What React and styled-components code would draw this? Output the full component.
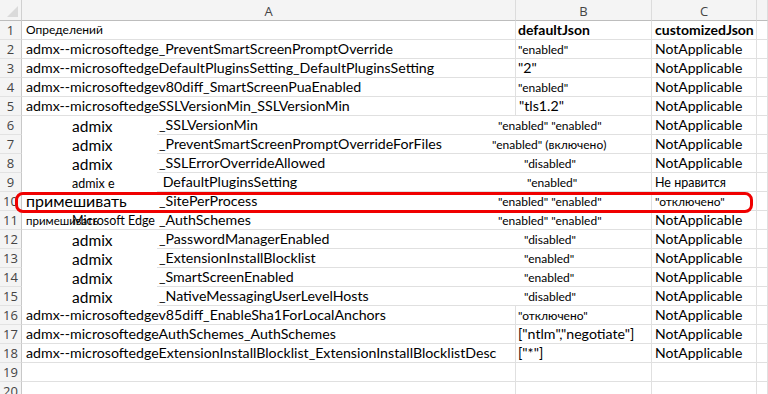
import React from "react";
import styled, { createGlobalStyle } from "styled-components";

const Global = createGlobalStyle`
  html, body { margin: 0; padding: 0; background: #fff; }
  body { font-family: Lato, "Liberation Sans", sans-serif; color: #000; overflow: hidden; }
`;

const Sheet = styled.div`
  position: relative;
  width: 768px;
  height: 394px;
  overflow: hidden;
  background: #fff;
`;

const Row = styled.div`
  display: flex;
  height: ${(p) => p.h || 19}px;
`;

const Corner = styled.div`
  position: relative;
  width: 22px;
  flex: none;
  background: #f4f4f4;
  border-right: 1px solid #d0d0d0;
  border-bottom: 1px solid #bdbdbd;
  box-sizing: border-box;
  &::after {
    content: "";
    position: absolute;
    right: 3px;
    bottom: 3px;
    width: 0;
    height: 0;
    border-left: 11px solid transparent;
    border-bottom: 11px solid #dadada;
  }
`;

const ColHead = styled.div`
  width: ${(p) => p.w}px;
  flex: ${(p) => (p.w ? "none" : "1")};
  background: #f4f4f4;
  border-right: 1px solid #dcdcdc;
  border-bottom: 1px solid #bdbdbd;
  box-sizing: border-box;
  display: flex;
  align-items: center;
  justify-content: center;
  font-family: "Open Sans", sans-serif;
  font-size: 13px;
  color: #444;
  padding-top: 1px;
`;

const RowHead = styled.div`
  width: 22px;
  flex: none;
  background: #f4f4f4;
  border-right: 1px solid #c8c8c8;
  border-bottom: 1px solid #e2e2e2;
  box-sizing: border-box;
  display: flex;
  align-items: center;
  justify-content: center;
  font-family: "Open Sans", sans-serif;
  font-size: 13px;
  color: #444;
`;

const Cell = styled.div`
  width: ${(p) => p.w}px;
  flex: ${(p) => (p.w ? "none" : "1")};
  box-sizing: border-box;
  border-right: 1px solid #e0e0e0;
  border-bottom: 1px solid #e0e0e0;
  display: flex;
  align-items: flex-end;
  padding-left: ${(p) => p.pl ?? 4}px;
  padding-bottom: 1px;
  white-space: nowrap;
  overflow: visible;
  min-width: 0;
`;

const Txt = styled.span`
  font-size: ${(p) => p.fs || 14.2}px;
  font-weight: ${(p) => (p.bold ? 700 : 400)};
  line-height: ${(p) => p.lh || 17}px;
  position: relative;
  top: ${(p) => p.dy || 0}px;
  white-space: pre;
`;

const SpanCell = styled.div`
  width: ${(p) => p.w}px;
  flex: none;
  box-sizing: border-box;
  border-right: 1px solid #e0e0e0;
  border-bottom: 1px solid #e0e0e0;
  display: grid;
  grid-template-columns: 359px 1fr;
  align-items: end;
  padding-bottom: 1px;
  white-space: nowrap;
`;

const Mid = styled.div`
  height: 100%;
  box-sizing: border-box;
  display: flex;
  align-items: flex-end;
  padding-left: 2px;
`;

const Val = styled.div`
  display: flex;
  align-items: flex-end;
  height: 100%;
  margin-left: ${(p) => p.ml}px;
`;

const Highlight = styled.div`
  position: absolute;
  left: 15px;
  top: 192px;
  width: 738px;
  height: 21px;
  border: 3px solid #f00000;
  border-radius: 8px;
  box-sizing: border-box;
  pointer-events: none;
`;

const Label = styled.div`
  width: 135px;
  flex: none;
  box-sizing: border-box;
  border-bottom: ${(p) => (p.lb ? "1px solid #e0e0e0" : "none")};
  position: relative;
  display: flex;
  align-items: flex-end;
  padding-left: ${(p) => p.pl}px;
  white-space: nowrap;
`;

const Over = styled.span`
  position: absolute;
  left: 50px;
  bottom: 0px;
  font-size: 12.5px;
  line-height: 16px;
`;

const W = { A: 494, B: 136, C: 105 };

const top = [
  ["Определений", "defaultJson", "customizedJson", { aFs: 12, head: true }],
  ["admx--microsoftedge_PreventSmartScreenPromptOverride", '"enabled"', "NotApplicable", { bFs: 12 }],
  ["admx--microsoftedgeDefaultPluginsSetting_DefaultPluginsSetting", '"2"', "NotApplicable", {}],
  ["admx--microsoftedgev80diff_SmartScreenPuaEnabled", '"enabled"', "NotApplicable", { bFs: 12 }],
  ["admx--microsoftedgeSSLVersionMin_SSLVersionMin", '"tls1.2"', "NotApplicable", { bPl: 3 }],
];

const mid = [
  { label: "admix", name: "_SSLVersionMin", val: '"enabled" "enabled"', vx: 499 },
  { label: "admix", name: "_PreventSmartScreenPromptOverrideForFiles", val: '"enabled" (включено)', vx: 493 },
  { label: "admix", name: "_SSLErrorOverrideAllowed", val: '"disabled"', vx: 525 },
  { label: "admix e", labelFs: 12.5, name: " DefaultPluginsSetting", val: '"enabled"', vx: 528, c: "Не нравится", cFs: 12.5 },
  { label: "примешивать", lx: 27, labelFs: 16, labelLh: 18, name: "_SitePerProcess", val: '"enabled" "enabled"', vx: 499, c: '"отключено"', cFs: 12, lb: true },
  { label: "примешивать", lx: 27, labelFs: 11.5, over: "Microsoft Edge", name: "_AuthSchemes", val: '"enabled" "enabled"', vx: 499, lb: true },
  { label: "admix", name: "_PasswordManagerEnabled", val: '"disabled"', vx: 525 },
  { label: "admix", name: "_ExtensionInstallBlocklist", val: '"enabled"', vx: 525 },
  { label: "admix", name: "_SmartScreenEnabled", val: '"enabled"', vx: 525 },
  { label: "admix", name: "_NativeMessagingUserLevelHosts", val: '"disabled"', vx: 525 },
];

const bottom = [
  ["admx--microsoftedgev85diff_EnableSha1ForLocalAnchors", '"отключено"', "NotApplicable", { bFs: 12 }],
  ["admx--microsoftedgeAuthSchemes_AuthSchemes", '["ntlm","negotiate"]', "NotApplicable", {}],
  ["admx--microsoftedgeExtensionInstallBlocklist_ExtensionInstallBlocklistDesc", '["*"]', "NotApplicable", {}],
  ["", "", "", {}],
  ["", "", "", {}],
];

function PlainRow({ n, r }) {
  const [a, b, c, o] = r;
  return (
    <Row>
      <RowHead>{n}</RowHead>
      <Cell w={W.A}>
        <Txt fs={o.aFs}>{a}</Txt>
      </Cell>
      <Cell w={W.B} pl={o.bPl ?? 2}>
        <Txt fs={o.head ? 14 : o.bFs} bold={o.head} dy={o.bFs ? 1 : 0}>
          {b}
        </Txt>
      </Cell>
      <Cell w={W.C} pl={3}>
        <Txt fs={14} bold={o.head}>{c}</Txt>
      </Cell>
      <Cell />
    </Row>
  );
}

function MidRow({ n, m }) {
  return (
    <Row>
      <RowHead>{n}</RowHead>
      <Label pl={m.lx ? m.lx - 23 : 50} lb={m.lb}>
        <Txt fs={m.labelFs || 15.5} lh={m.labelLh || (m.labelFs ? 16 : 18)}>{m.label}</Txt>
        {m.over && <Over>{m.over}</Over>}
      </Label>
      <SpanCell w={652 - 158 + 1}>
        <Mid>
          <Txt>{m.name}</Txt>
        </Mid>
        <Val ml={m.vx - 517}>
          <Txt fs={12} dy={1}>{m.val}</Txt>
        </Val>
      </SpanCell>
      <Cell w={W.C} pl={3}>
        <Txt fs={m.cFs || 14} dy={m.cFs ? 1 : 0}>{m.c || "NotApplicable"}</Txt>
      </Cell>
      <Cell />
    </Row>
  );
}

export default function App() {
  let n = 0;
  return (
    <Sheet>
      <Global />
      <Row h={21}>
        <Corner />
        <ColHead w={W.A}>A</ColHead>
        <ColHead w={W.B}>B</ColHead>
        <ColHead w={W.C}>C</ColHead>
        <ColHead />
      </Row>
      {top.map((r) => {
        n += 1;
        return <PlainRow key={n} n={n} r={r} />;
      })}
      {mid.map((m) => {
        n += 1;
        return <MidRow key={n} n={n} m={m} />;
      })}
      {bottom.map((r) => {
        n += 1;
        return <PlainRow key={n} n={n} r={r} />;
      })}
      <Highlight />
    </Sheet>
  );
}
